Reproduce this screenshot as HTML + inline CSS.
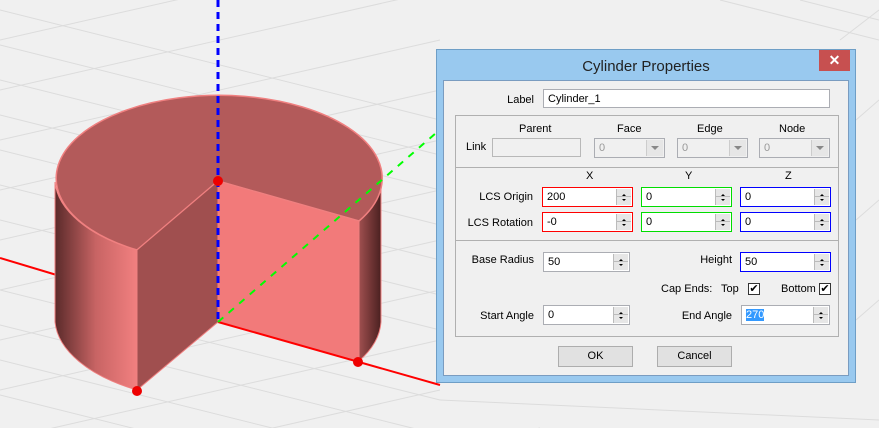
<!DOCTYPE html>
<html><head><meta charset="utf-8"><style>
*{margin:0;padding:0;box-sizing:border-box}
html,body{width:879px;height:428px;overflow:hidden}
body{background:#f0f0f0;font-family:"Liberation Sans",sans-serif;font-size:11px;color:#000;position:relative}
svg{display:block}
.a{position:absolute}
.t{position:absolute;white-space:nowrap;line-height:12px}
.r{text-align:right}
.f{position:absolute;background:#fff;border:1px solid #abadb3;height:20px}
.sp{position:absolute;right:1px;top:1px;width:15px;height:16px;background:#e6e6e6;border-left:1px solid #bbb}
.sp:before{content:"";position:absolute;left:5px;top:3px;border:2px solid transparent;border-bottom:2px solid #000}
.sp:after{content:"";position:absolute;left:5px;top:10px;border:2px solid transparent;border-top:2px solid #000}
.sp i{position:absolute;left:0;right:0;top:7px;border-top:1px solid #bbb}
.v{position:absolute;left:4px;top:3px;line-height:12px}
.cb{position:absolute;border:1px solid #abadb3;background:#f0f0f0;height:20px}
.cb .v{color:#999}
.dd{position:absolute;right:1px;top:1px;width:17px;height:16px;background:#e6e6e6;border-left:1px solid #ccc}
.dd:after{content:"";position:absolute;left:4px;top:6px;border:4px solid transparent;border-top:4px solid #888}
.btn{position:absolute;border:1px solid #adadad;background:#e1e1e1;text-align:center;line-height:18px;height:21px}
.chk{position:absolute;width:12px;height:12px;border:1px solid #333;background:#fff;font-size:11px;line-height:10px;text-align:center}
</style></head><body>
<svg class="a" style="left:0;top:0" width="879" height="428">
<g stroke="#dcdcdc" stroke-width="1">
<line x1="0" y1="40" x2="440" y2="-60"/><line x1="0" y1="90" x2="440" y2="-10"/><line x1="0" y1="140" x2="440" y2="40"/><line x1="0" y1="190" x2="440" y2="90"/><line x1="0" y1="240" x2="440" y2="140"/><line x1="0" y1="290" x2="440" y2="190"/><line x1="0" y1="340" x2="440" y2="240"/><line x1="0" y1="390" x2="440" y2="290"/><line x1="0" y1="440" x2="440" y2="340"/><line x1="0" y1="490" x2="440" y2="390"/><line x1="100" y1="528" x2="540" y2="428"/>
<line x1="0" y1="10" x2="440" y2="120"/><line x1="0" y1="45" x2="440" y2="155"/><line x1="0" y1="80" x2="440" y2="190"/><line x1="0" y1="115" x2="440" y2="225"/><line x1="0" y1="150" x2="440" y2="260"/><line x1="0" y1="185" x2="440" y2="295"/><line x1="0" y1="220" x2="440" y2="330"/><line x1="0" y1="290" x2="440" y2="400"/><line x1="0" y1="325" x2="440" y2="435"/><line x1="0" y1="360" x2="440" y2="470"/><line x1="0" y1="395" x2="440" y2="505"/>
<line x1="720" y1="0" x2="879" y2="40"/><line x1="800" y1="0" x2="879" y2="20"/><line x1="840" y1="40" x2="879" y2="10"/><line x1="856" y1="120" x2="879" y2="100"/><line x1="856" y1="220" x2="879" y2="200"/><line x1="856" y1="320" x2="879" y2="300"/><line x1="440" y1="400" x2="879" y2="420"/>
</g>
<line x1="0" y1="258" x2="60" y2="276" stroke="#f00" stroke-width="2"/>
<defs><linearGradient id="gl" x1="0" x2="1"><stop offset="0" stop-color="#5a2a2a"/><stop offset="0.5" stop-color="#c86464"/><stop offset="1" stop-color="#f28080"/></linearGradient>
<linearGradient id="gr" x1="0" x2="1"><stop offset="0" stop-color="#a04f4f"/><stop offset="1" stop-color="#4a2020"/></linearGradient></defs>
<path d="M55,182 L55,322 A163,83 0 0 0 137,390 L137,250 A163,83 0 0 1 55,182Z" fill="url(#gl)" stroke="#f08080" stroke-width="1"/>
<path d="M359,221 L359,361 A163,83 0 0 0 381,322 L381,182 A163,83 0 0 1 359,221Z" fill="url(#gr)" stroke="#f08080" stroke-width="1"/>
<path d="M218,181 L137,250 A163,83 0 1 1 359,221 Z" fill="#b35a5a" stroke="#f08080" stroke-width="1.5"/>
<path d="M137,250 L218,181 L218,322 L137,390Z" fill="#a04f4f" stroke="#f08080" stroke-width="1"/>
<path d="M218,181 L359,221 L359,361 L218,322Z" fill="#f27a7a" stroke="#f08080" stroke-width="1"/>
<line x1="218" y1="322" x2="440" y2="385" stroke="#f00" stroke-width="2"/>
<line x1="218" y1="0" x2="218" y2="322" stroke="#00f" stroke-width="3" stroke-dasharray="7,5"/>
<line x1="218" y1="322" x2="436" y2="133" stroke="#0f0" stroke-width="2" stroke-dasharray="7,7"/>
<circle cx="218" cy="181" r="5" fill="#e00"/><circle cx="137" cy="391" r="5" fill="#e00"/><circle cx="358" cy="362" r="5" fill="#e00"/>
</svg>
<div class="a" style="left:436px;top:49px;width:420px;height:334px;background:#99c9ef;border:1px solid #6e9ec6"></div>
<div class="t" style="left:436px;top:59px;width:420px;text-align:center;font-size:15px;line-height:16px;color:#222">Cylinder Properties</div>
<div class="a" style="left:819px;top:50px;width:31px;height:21px;background:#c75050;color:#fff;text-align:center;font-size:14px;line-height:20px;font-weight:bold">✕</div>
<div class="a" style="left:443px;top:80px;width:406px;height:296px;background:#f0f0f0;border:1px solid #7a9cc0"></div>
<div class="t r" style="left:480px;top:94px;width:54px">Label</div>
<div class="f" style="left:543px;top:89px;width:287px;height:19px"><span class="v">Cylinder_1</span></div>
<div class="a" style="left:455px;top:115px;width:384px;height:222px;border:1px solid #b0b0b0"></div>
<div class="a" style="left:455px;top:167px;width:384px;border-top:1px solid #b0b0b0"></div>
<div class="a" style="left:455px;top:240px;width:384px;border-top:1px solid #b0b0b0"></div>
<div class="t" style="left:519px;top:123px">Parent</div>
<div class="t" style="left:466px;top:141px">Link</div>
<div class="a" style="left:492px;top:138px;width:89px;height:19px;border:1px solid #b8b8b8;background:#f0f0f0"></div>
<div class="t" style="left:617px;top:123px">Face</div>
<div class="t" style="left:697px;top:123px">Edge</div>
<div class="t" style="left:779px;top:123px">Node</div>
<div class="cb" style="left:594px;top:138px;width:71px"><span class="v">0</span><i class="dd"></i></div>
<div class="cb" style="left:677px;top:138px;width:71px"><span class="v">0</span><i class="dd"></i></div>
<div class="cb" style="left:759px;top:138px;width:71px"><span class="v">0</span><i class="dd"></i></div>
<div class="t" style="left:586px;top:170px">X</div>
<div class="t" style="left:685px;top:170px">Y</div>
<div class="t" style="left:785px;top:170px">Z</div>
<div class="t r" style="left:460px;top:191px;width:73px">LCS Origin</div>
<div class="t r" style="left:460px;top:217px;width:73px">LCS Rotation</div>
<div class="f" style="left:542px;top:187px;width:91px;border-color:#f00"><span class="v">200</span><i class="sp"><i></i></i></div>
<div class="f" style="left:641px;top:187px;width:91px;border-color:#0d0"><span class="v">0</span><i class="sp"><i></i></i></div>
<div class="f" style="left:740px;top:187px;width:91px;border-color:#00f"><span class="v">0</span><i class="sp"><i></i></i></div>
<div class="f" style="left:542px;top:212px;width:91px;border-color:#f00"><span class="v">-0</span><i class="sp"><i></i></i></div>
<div class="f" style="left:641px;top:212px;width:91px;border-color:#0d0"><span class="v">0</span><i class="sp"><i></i></i></div>
<div class="f" style="left:740px;top:212px;width:91px;border-color:#00f"><span class="v">0</span><i class="sp"><i></i></i></div>
<div class="t r" style="left:460px;top:254px;width:74px">Base Radius</div>
<div class="f" style="left:543px;top:252px;width:87px"><span class="v">50</span><i class="sp"><i></i></i></div>
<div class="t r" style="left:660px;top:254px;width:72px">Height</div>
<div class="f" style="left:740px;top:252px;width:91px;border-color:#00f"><span class="v">50</span><i class="sp"><i></i></i></div>
<div class="t" style="left:661px;top:283px">Cap Ends:</div>
<div class="t" style="left:721px;top:283px">Top</div>
<div class="chk" style="left:748px;top:283px">✔</div>
<div class="t" style="left:781px;top:283px">Bottom</div>
<div class="chk" style="left:819px;top:283px">✔</div>
<div class="t r" style="left:460px;top:310px;width:74px">Start Angle</div>
<div class="f" style="left:543px;top:305px;width:87px"><span class="v">0</span><i class="sp"><i></i></i></div>
<div class="t r" style="left:660px;top:310px;width:72px">End Angle</div>
<div class="f" style="left:741px;top:305px;width:89px"><span class="v" style="background:#3399ff;color:#fff">270</span><i class="sp"><i></i></i></div>
<div class="btn" style="left:558px;top:346px;width:75px">OK</div>
<div class="btn" style="left:657px;top:346px;width:75px">Cancel</div>
</body></html>
